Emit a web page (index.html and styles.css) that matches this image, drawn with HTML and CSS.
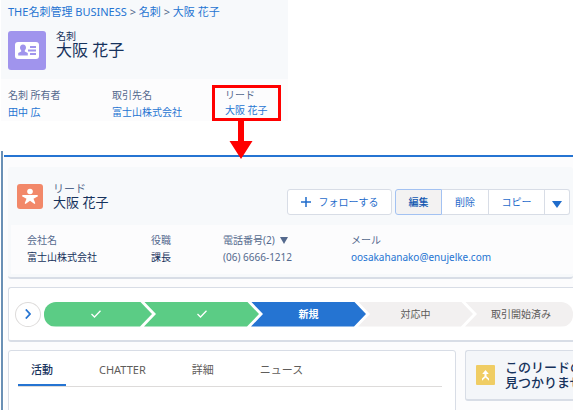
FILE: index.html
```html
<!DOCTYPE html>
<html lang="ja">
<head>
<meta charset="utf-8">
<title>大阪 花子</title>
<link rel="stylesheet" href="styles.css">
</head>
<body>
<section class="card-record">
  <header class="card-head">
    <nav class="crumbs"><a href="#">THE名刺管理 BUSINESS</a> &gt; <a href="#">名刺</a> &gt; <a href="#">大阪 花子</a></nav>
    <div class="card-title">
      <svg class="card-icon" viewBox="0 0 38 39" aria-hidden="true"><rect width="38" height="39" rx="3" fill="#a094ed"/><rect x="7" y="11" width="24" height="17" rx="3" fill="#fff"/><path d="M15 13.500c2 0 3 1.500 3 3.200 0 1.200-.6 2-1.200 2.600v1.200l3 1.500v2.500h-9.600v-2.500l3-1.500v-1.200c-.6-.6-1.200-1.400-1.200-2.600 0-1.700 1-3.200 3-3.200zM22 15h6v2h-6zM20 18.500h8v2h-8zM22 22h6v2h-6z" fill="#a094ed"/></svg>
      <div><div class="kind">名刺</div><h1>大阪 花子</h1></div>
    </div>
  </header>
  <dl class="card-fields">
    <div><dt>名刺 所有者</dt><dd><a href="#">田中 広</a></dd></div>
    <div><dt>取引先名</dt><dd><a href="#">富士山株式会社</a></dd></div>
    <div class="callout"><dt>リード</dt><dd><a href="#">大阪 花子</a></dd>
      <svg class="arrow" viewBox="0 0 24 38" aria-hidden="true"><path d="M9 0h6v20h8.500L12 38 .5 20H9z" fill="#f00"/></svg>
    </div>
  </dl>
</section>
<main class="lead">
  <div class="lead-body">
  <section class="lead-card">
    <header class="lead-head">
      <svg class="lead-icon" viewBox="0 0 26 25" aria-hidden="true"><rect width="26" height="25" rx="3" fill="#f28869"/><circle cx="13" cy="7.500" r="2.800" fill="#fff"/><path d="M5.500 11h15l.5 1.300-4.500 2.400 1.800 4.600-.8.700L13 16.800 8.500 20l-.8-.7 1.800-4.600L5 12.300z" fill="#fff"/></svg>
      <div><div class="kind">リード</div><h2>大阪 花子</h2></div>
      <div class="actions">
        <button class="btn follow" type="button"><svg viewBox="0 0 10 10" aria-hidden="true"><path d="M5 0v10M0 5h10" stroke="currentColor" stroke-width="1.500"/></svg>フォローする</button>
        <div class="group">
          <button class="btn active" type="button">編集</button>
          <button class="btn" type="button">削除</button>
          <button class="btn copy" type="button">コピー</button>
          <button class="btn more" type="button" aria-label="その他"><svg viewBox="0 0 10 7" aria-hidden="true"><path d="M0 0h10L5 7z" fill="currentColor"/></svg></button>
        </div>
      </div>
    </header>
    <dl class="lead-fields">
      <div><dt>会社名</dt><dd class="strong">富士山株式会社</dd></div>
      <div><dt>役職</dt><dd class="strong">課長</dd></div>
      <div><dt>電話番号(2) <svg class="caret" viewBox="0 0 10 7" aria-hidden="true"><path d="M1 0h8L5 7z" fill="#54698d"/></svg></dt><dd>(06) 6666-1212</dd></div>
      <div><dt>メール</dt><dd><a href="#">oosakahanako@enujelke.com</a></dd></div>
    </dl>
  </section>
  <section class="path-card">
    <button class="expand" type="button" aria-label="展開"><svg viewBox="0 0 6 10" aria-hidden="true"><path d="M.8.500L5 5 .8 9.500" fill="none" stroke="#2574d2" stroke-width="1.800"/></svg></button>
    <ol class="path">
      <li class="done first"><svg viewBox="0 0 10 8" aria-label="完了"><path d="M.5 4l3 3L9.500.8" fill="none" stroke="#fff" stroke-width="1.300"/></svg></li>
      <li class="done"><svg viewBox="0 0 10 8" aria-label="完了"><path d="M.5 4l3 3L9.500.8" fill="none" stroke="#fff" stroke-width="1.300"/></svg></li>
      <li class="current">新規</li>
      <li>対応中</li>
      <li class="last">取引開始済み</li>
    </ol>
  </section>
  <div class="columns">
    <section class="tabs-card">
      <nav class="tabs"><a class="on" href="#">活動</a><a href="#">CHATTER</a><a href="#">詳細</a><a href="#">ニュース</a></nav>
    </section>
    <aside class="notice">
      <svg class="notice-icon" viewBox="0 0 19 20" aria-hidden="true"><rect width="19" height="20" rx="1" fill="#f0cd64"/><path d="M9.500 5l3.300 4h-2.300v2.200l2.500 2.300v2.300l-3.500-3.300L6 15.800v-2.300l2.500-2.300V9H6.200z" fill="#fff"/></svg>
      <p>このリードの<br>見つかりません</p>
    </aside>
  </div>
  </div>
</main>
</body>
</html>
```

FILE: styles.css
```css
* { box-sizing: border-box; }
body {
  margin: 0;
  height: 100vh;
  overflow: hidden;
  display: flex;
  flex-direction: column;
  background: #fff;
  color: #16325c;
  font: 10px/14px "Noto Sans", "Noto Sans CJK JP", sans-serif;
}
h1, h2, p, dl, dd, ol { margin: 0; padding: 0; font-weight: 400; }
svg { display: block; flex: none; }
a { color: #2574d2; text-decoration: none; }
button { font: inherit; padding: 0; }

.card-record { width: 50.3%; padding-left: 1px; flex: none; }
.card-head { background: #f7f9fb; padding: 5px 7px 9px; }
.crumbs { color: #54698d; font-size: 11px; }
.card-title { display: flex; gap: 10px; margin-top: 12px; }
.card-icon { width: 38px; height: 39px; }
.card-title .kind { line-height: 10px; }
.card-title h1 { font-size: 16px; line-height: 18px; }
.card-fields {
  display: grid;
  grid-template-columns: 104px 100px 69px;
  background: #fcfcfd;
  padding: 6px 7px 0;
}
.card-fields > div { padding-top: 2px; height: 36px; line-height: 17px; }
.card-fields dt, .lead-fields dt { color: #54698d; }
.card-fields .callout {
  position: relative;
  border: 3px solid #f00;
  padding: 0 0 0 10px;
  line-height: 15px;
}
.arrow { position: absolute; left: 14px; top: 33px; width: 24px; height: 38px; z-index: 2; }

.lead {
  flex: 1;
  display: flex;
  flex-direction: column;
  margin: 30px 0 4px 1px;
  border-left: 2px solid #6a90b5;
  padding: 4px 0 0 1px;
  min-height: 0;
}
.lead-body {
  flex: 1;
  min-height: 0;
  overflow: hidden;
  border-top: 2px solid #2574d2;
  background: #fcfcfd;
  padding: 10px 0 0 4px;
}
.lead-card { background: #f7f9fb; border-bottom: 2px solid #d8dde6; border-radius: 3px; padding: 0 0 3px 3px; }
.lead-head { display: flex; align-items: center; height: 58px; padding: 0 3px 0 6px; gap: 10px; }
.lead-icon { width: 26px; height: 25px; }
.lead-head .kind { font-size: 11px; line-height: 12px; color: #54698d; }
.lead-head h2 { font-size: 13px; line-height: 15px; }
.actions { display: flex; gap: 3px; margin: 12px 0 0 auto; }
.btn {
  display: flex;
  align-items: center;
  justify-content: center;
  gap: 8px;
  height: 26px;
  width: 47px;
  border: 1px solid #d8dde6;
  background: #fff;
  color: #1f6ccb;
}
.follow { width: 105px; border-radius: 3px; }
.follow svg { width: 10px; height: 10px; }
.group { display: flex; }
.group .btn + .btn { border-left: 0; }
.group .btn:first-child { border-radius: 3px 0 0 3px; }
.group .btn:last-child { border-radius: 0 3px 3px 0; }
.group .active { background: #f3f2f2; border-color: #a3c2f2; color: #0f56b0; font-weight: 500; }
.group .copy { width: 56px; }
.group .more { width: 25px; padding-top: 4px; }
.more svg { width: 10px; height: 7px; }
.lead-fields {
  display: grid;
  grid-template-columns: 124px 72px 128px 1fr;
  background: #fcfcfd;
  padding: 7px 0 8px 16px;
  line-height: 17px;
}
.caret { display: inline-block; width: 10px; height: 7px; margin-left: 2px; }
.lead-fields dd { color: #54698d; }
.lead-fields .strong { color: #16325c; }

.path-card {
  display: flex;
  align-items: center;
  gap: 3px;
  height: 55px;
  margin-top: 8px;
  padding-left: 6px;
  border: 1px solid #d8dde6;
  border-bottom-width: 2px;
  border-right: 0;
  border-radius: 3px 0 0 3px;
  background: #fff;
}
.expand {
  width: 26px;
  height: 25px;
  flex: none;
  display: grid;
  place-items: center;
  border: 1px solid #dddbda;
  border-radius: 50%;
  background: #fff;
}
.expand svg { width: 6px; height: 10px; }
.path { display: grid; grid-template-columns: 100fr 107fr 107fr 107fr 108fr; flex: 1; list-style: none; }
.path li {
  display: flex;
  align-items: center;
  justify-content: center;
  height: 25px;
  margin-right: -8px;
  background: #f2f0f0;
  color: #5c5a58;
  clip-path: polygon(0 0, calc(100% - 12px) 0, 100% 50%, calc(100% - 12px) 100%, 0 100%, 12px 50%);
}
.path .done { background: #5bcc85; }
.path .current { background: #2574d2; color: #fff; font-weight: 700; }
.path .first { padding-right: 4px; clip-path: polygon(0 0, calc(100% - 12px) 0, 100% 50%, calc(100% - 12px) 100%, 0 100%); border-radius: 12px 0 0 12px; }
.path .last { margin-right: 0; padding-left: 4px; clip-path: polygon(0 0, 100% 0, 100% 100%, 0 100%, 12px 50%); border-radius: 0 12px 12px 0; }
.path svg { width: 10px; height: 8px; }

.columns { display: grid; grid-template-columns: 448px 1fr; gap: 9px; align-items: start; margin-top: 8px; }
.tabs-card { border: 1px solid #d8dde6; border-radius: 3px; background: #fff; height: 100px; padding: 0 13px 0 9px; }
.tabs { display: flex; gap: 20px; border-bottom: 1px solid #dddbda; font-size: 11px; }
.tabs a { padding: 12px 13px 7px; line-height: 14px; border-bottom: 2px solid transparent; color: #5f5d5b; }
.tabs .on { border-color: #2574d2; color: #16325c; font-weight: 500; }
.notice {
  display: flex;
  gap: 10px;
  border: 1px solid #d8dde6;
  border-bottom-width: 2px;
  border-right: 0;
  border-radius: 3px 0 0 3px;
  background: #f4f6f9;
  padding: 9px 0 9px 10px;
}
.notice-icon { width: 19px; height: 20px; margin-top: 5px; }
.notice p { font-size: 13px; line-height: 15px; white-space: nowrap; font-weight: 500; }
```
